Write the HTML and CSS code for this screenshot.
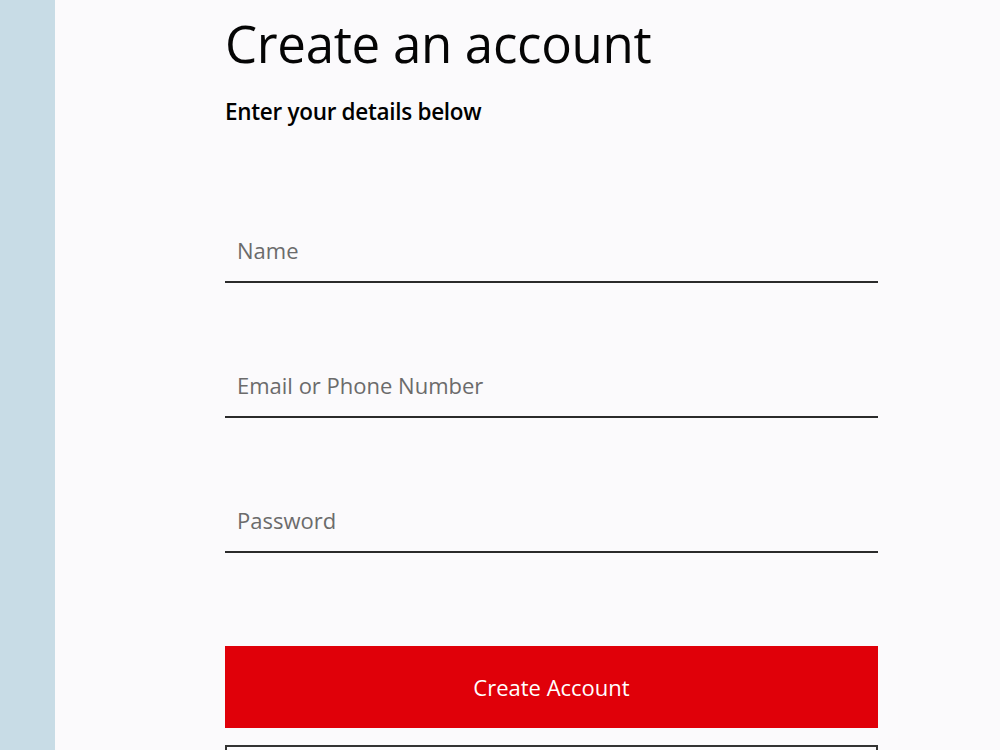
FILE: index.html
```html
<!DOCTYPE html>
<html lang="en">
<head>
  <meta charset="UTF-8">
  <meta name="viewport" content="width=device-width, initial-scale=1.0">
  <title>Create an account</title>
  <link rel="stylesheet" href="styles.css">
</head>
<body>
  <div class="side"></div>

  <main class="content">
    <h1>Create an account</h1>
    <p class="subtitle">Enter your details below</p>

    <form class="signup">
      <input type="text" placeholder="Name">
      <input type="text" placeholder="Email or Phone Number">
      <input type="password" placeholder="Password">

      <button type="button" class="btn-primary">Create Account</button>
      <!-- second button only shows its top edge in the viewport -->
      <button type="button" class="btn-google" aria-label="Sign up with Google"></button>
    </form>
  </main>
</body>
</html>
```

FILE: styles.css
```css
body {
  margin: 0;
  background-color: #fbfafc;
  font-family: "Open Sans", sans-serif;
  color: #000;
  display: flex;
  min-height: 100vh;
}

.side {
  width: 55px;
  flex-shrink: 0;
  background-color: #c8dce6;
}

.content {
  padding-left: 170px;
  width: 653px;
}

h1 {
  margin: 8px 0 0;
  font-size: 51px;
  font-weight: 500;
  line-height: 70px;
  letter-spacing: -0.3px;
  color: #050505;
}

.subtitle {
  margin: 18px 0 0;
  font-size: 22.5px;
  font-weight: 600;
  letter-spacing: -0.3px;
}

.signup {
  display: flex;
  flex-direction: column;
  margin-top: 96px;
}

.signup input {
  border: none;
  border-bottom: 2px solid #2b2b2b;
  background: transparent;
  font-family: inherit;
  font-size: 22px;
  padding: 12px 12px 16px;
  margin-bottom: 75px;
  outline: none;
}

.signup input::placeholder {
  color: #6b6b6b;
}

.btn-primary {
  margin-top: 18px;
  height: 82px;
  border: none;
  background-color: #e00009;
  color: #fff;
  font-family: inherit;
  font-size: 22px;
  cursor: pointer;
}

.btn-google {
  margin-top: 17px;
  height: 82px;
  border: 2px solid #333;
  background: transparent;
  cursor: pointer;
}
```
